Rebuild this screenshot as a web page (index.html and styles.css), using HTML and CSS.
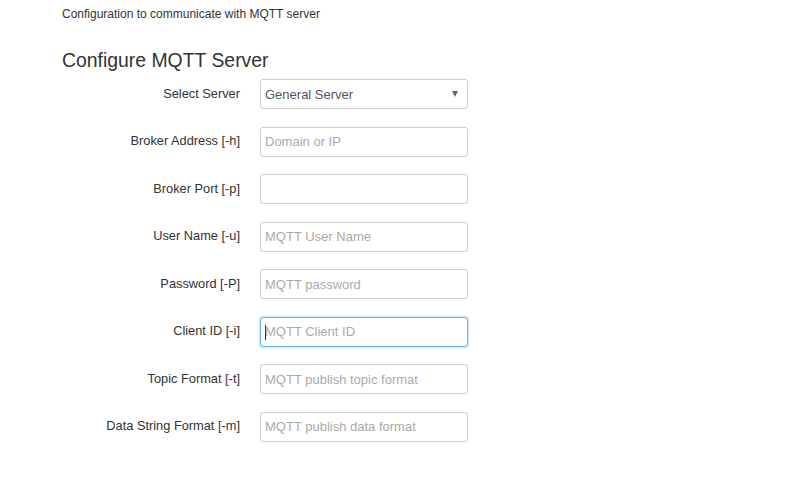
FILE: index.html
```html
<!DOCTYPE html>
<html>
<head>
    <meta charset="utf-8">
    <title>MQTT</title>
    <link rel="stylesheet" href="styles.css">
</head>
<body>
    <div class="page">
        <p class="intro">Configuration to communicate with MQTT server</p>
        <h2 class="title">Configure MQTT Server</h2>
        <form class="mqtt-form">
            <label class="field-label" for="server">Select Server</label>
            <span class="select-wrap">
                <select id="server" class="field">
                    <option>General Server</option>
                </select>
            </span>

            <label class="field-label" for="host">Broker Address [-h]</label>
            <input id="host" class="field" type="text" placeholder="Domain or IP">

            <label class="field-label" for="port">Broker Port [-p]</label>
            <input id="port" class="field" type="text">

            <label class="field-label" for="user">User Name [-u]</label>
            <input id="user" class="field" type="text" placeholder="MQTT User Name">

            <label class="field-label" for="pass">Password [-P]</label>
            <input id="pass" class="field" type="password" placeholder="MQTT password">

            <label class="field-label" for="client">Client ID [-i]</label>
            <span class="caret-wrap">
                <input id="client" class="field focused" type="text" placeholder="MQTT Client ID">
            </span>

            <label class="field-label" for="topic">Topic Format [-t]</label>
            <input id="topic" class="field" type="text" placeholder="MQTT publish topic format">

            <label class="field-label" for="data">Data String Format [-m]</label>
            <input id="data" class="field" type="text" placeholder="MQTT publish data format">
        </form>
    </div>
</body>
</html>
```

FILE: styles.css
```css
html, body {
    margin: 0;
    padding: 0;
    background: #fff;
}

body {
    font-family: "Liberation Sans", Arial, sans-serif;
    color: #333;
}

.page {
    padding: 6px 0 0 62px;
}

.intro {
    margin: 0;
    font-size: 12px;
    line-height: 16px;
}

.title {
    margin: 24px 0 0 0;
    font-size: 19.4px;
    font-weight: normal;
    line-height: 28px;
}

.mqtt-form {
    display: grid;
    grid-template-columns: 178px 208px;
    grid-auto-rows: 30px;
    column-gap: 20px;
    row-gap: 17.57px;
    margin-top: 5px;
}

.field-label {
    justify-self: end;
    align-self: center;
    font-size: 12.8px;
    margin-top: -2px;
}

.field {
    box-sizing: border-box;
    width: 208px;
    height: 30px;
    margin: 0;
    padding: 0 4px;
    border: 1px solid #ccc;
    border-radius: 3px;
    font-family: "Liberation Sans", Arial, sans-serif;
    font-size: 13px;
    color: #555;
    background: #fff;
    outline: none;
}

.field::placeholder {
    color: #aaa;
}

select.field {
    -webkit-appearance: none;
    appearance: none;
    padding-left: 4px;
    color: #555;
}

.select-wrap,
.caret-wrap {
    position: relative;
    display: block;
}

.select-wrap::after {
    content: "";
    position: absolute;
    right: 10px;
    top: 12px;
    border-left: 3px solid transparent;
    border-right: 3px solid transparent;
    border-top: 6px solid #666;
}

.field.focused {
    border-color: #66afe9;
    box-shadow: 0 0 3px rgba(102, 175, 233, 0.7);
}

.caret-wrap::after {
    content: "";
    position: absolute;
    left: 5px;
    top: 8px;
    width: 1px;
    height: 15px;
    background: #333;
}
```
